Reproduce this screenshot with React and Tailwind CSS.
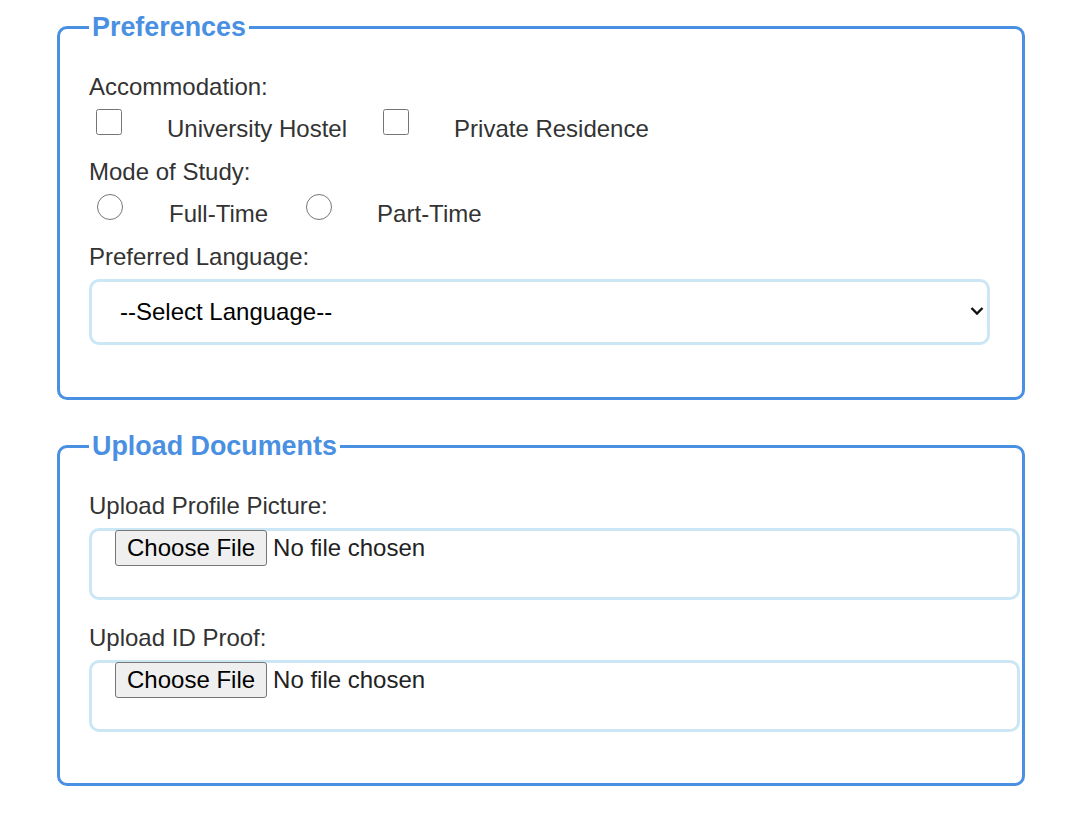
import { useState } from "react";

const Section = ({ title, children }) => (
  <fieldset className="w-[968px] ml-[57px] border-[3px] border-[#4a90e2] rounded-[10px] pl-[29px] pr-[30px] pt-[30px] pb-[30px] m-0 min-w-0">
    <legend className="px-[3px] text-[26.88px] leading-[31px] font-bold text-[#4a90e2]">
      {title}
    </legend>
    {children}
  </fieldset>
);

const Label = ({ children }) => (
  <div className="text-[24px] leading-[28px] text-[#333]">{children}</div>
);

const FileBox = ({ id }) => (
  <div className="mt-[8px] w-[931px] h-[72px] border-[3px] border-[#cbe6f5] rounded-[10px] pl-[23px] flex items-start">
    <label htmlFor={id} className="-mt-px flex items-center cursor-pointer">
      <span className="h-[36px] px-[11px] flex items-center bg-[#efefef] border border-[#767676] rounded-[3px] text-[24px] leading-[28px] text-black">
        Choose File
      </span>
      <span className="ml-[6px] text-[24px] leading-[28px] text-[#222]">
        No file chosen
      </span>
    </label>
    <input id={id} type="file" className="hidden" />
  </div>
);

export default function App() {
  const [lang, setLang] = useState("");

  return (
    <div
      className="min-h-screen bg-white pt-[12px] pb-[30px]"
      style={{ fontFamily: '"Liberation Sans", Arial, sans-serif' }}
    >
      <Section title="Preferences">
        <Label>Accommodation:</Label>
        <div className="flex items-start pb-[15px]">
          <input type="checkbox" className="mt-[8px] ml-[7px] w-[26px] h-[26px] m-0" />
          <span className="mt-[14px] ml-[45px] text-[24px] leading-[28px] text-[#333]">
            University Hostel
          </span>
          <input type="checkbox" className="mt-[8px] ml-[36px] w-[26px] h-[26px] m-0" />
          <span className="mt-[14px] ml-[45px] text-[24px] leading-[28px] text-[#333]">
            Private Residence
          </span>
        </div>

        <Label>Mode of Study:</Label>
        <div className="flex items-start pb-[15px]">
          <input type="radio" name="mode" className="mt-[8px] ml-[8px] w-[26px] h-[26px] m-0" />
          <span className="mt-[14px] ml-[46px] text-[24px] leading-[28px] text-[#333]">
            Full-Time
          </span>
          <input type="radio" name="mode" className="mt-[8px] ml-[38px] w-[26px] h-[26px] m-0" />
          <span className="mt-[14px] ml-[45px] text-[24px] leading-[28px] text-[#333]">
            Part-Time
          </span>
        </div>

        <Label>Preferred Language:</Label>
        <div className="relative mt-[8px] mb-[22px] w-[901px]">
          <select
            value={lang}
            onChange={(e) => setLang(e.target.value)}
            className="appearance-none w-full h-[66px] border-[3px] border-[#cbe6f5] rounded-[10px] pl-[28px] pr-[30px] text-[24px] text-black bg-white"
          >
            <option value="">--Select Language--</option>
            <option value="en">English</option>
            <option value="fr">French</option>
            <option value="es">Spanish</option>
          </select>
          <svg
            className="absolute right-[6px] top-[27px] pointer-events-none"
            width="14"
            height="10"
            viewBox="0 0 14 10"
          >
            <path d="M1.5 2 L7 7.5 L12.5 2" fill="none" stroke="#111" strokeWidth="2.4" />
          </svg>
        </div>
      </Section>

      <div className="h-[31px]" />

      <Section title="Upload Documents">
        <div className="mb-[24px]">
          <Label>Upload Profile Picture:</Label>
          <FileBox id="profile" />
        </div>
        <div className="mb-[21px]">
          <Label>Upload ID Proof:</Label>
          <FileBox id="idproof" />
        </div>
      </Section>
    </div>
  );
}
